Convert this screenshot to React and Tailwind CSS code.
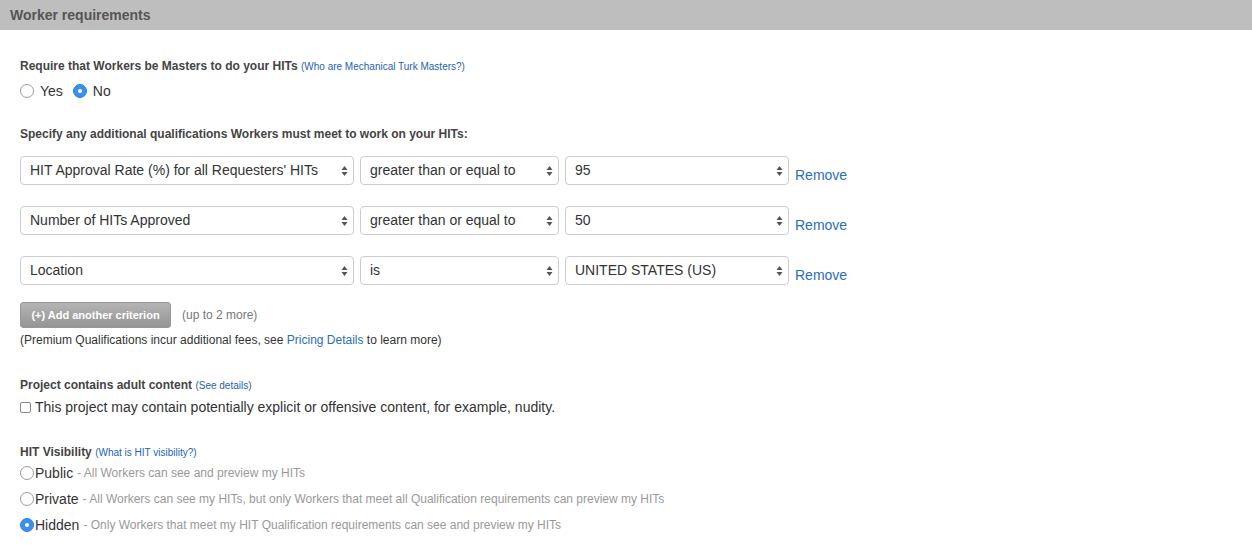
import { useState } from "react";

const font = { fontFamily: '"Liberation Sans", Arial, sans-serif' };

function Arrows() {
  return (
    <svg width="7" height="12" viewBox="0 0 7 12" className="shrink-0">
      <path d="M3.5 1 L6.5 5 L0.5 5 Z" fill="#555" />
      <path d="M3.5 11 L6.5 7 L0.5 7 Z" fill="#555" />
    </svg>
  );
}

function FakeSelect({ value, width }) {
  return (
    <div
      className={`flex items-center justify-between h-[29px] border border-[#ccc] rounded-[4px] bg-white pl-[9px] pr-[5px] text-[14px] text-[#333] ${width}`}
    >
      <span className="truncate">{value}</span>
      <Arrows />
    </div>
  );
}

function Radio({ checked }) {
  return checked ? (
    <span className="inline-flex items-center justify-center w-[14px] h-[14px] rounded-full bg-[#3b8fef] border border-[#2f7fe0] shrink-0">
      <span className="w-[4px] h-[4px] rounded-full bg-white" />
    </span>
  ) : (
    <span className="inline-block w-[14px] h-[14px] rounded-full border border-[#9a9a9a] bg-white shrink-0" />
  );
}

export default function App() {
  const [masters, setMasters] = useState("no");
  const [visibility, setVisibility] = useState("hidden");

  const criteria = [
    { q: "HIT Approval Rate (%) for all Requesters' HITs", op: "greater than or equal to", v: "95" },
    { q: "Number of HITs Approved", op: "greater than or equal to", v: "50" },
    { q: "Location", op: "is", v: "UNITED STATES (US)" },
  ];

  const visOptions = [
    { key: "public", label: "Public", desc: "All Workers can see and preview my HITs" },
    { key: "private", label: "Private", desc: "All Workers can see my HITs, but only Workers that meet all Qualification requirements can preview my HITs" },
    { key: "hidden", label: "Hidden", desc: "Only Workers that meet my HIT Qualification requirements can see and preview my HITs" },
  ];

  return (
    <div className="w-[1252px] h-[560px] bg-white overflow-hidden text-[#333]" style={font}>
      {/* Header */}
      <div className="h-[30px] bg-[#bebebe] flex items-center px-[10px]">
        <h2 className="text-[14px] font-bold text-[#555]">Worker requirements</h2>
      </div>

      <div className="px-[20px]">
        {/* Masters */}
        <div className="mt-[28px] text-[12px] font-bold text-[#444] leading-[16px]">
          Require that Workers be Masters to do your HITs{" "}
          <a className="text-[10px] font-normal text-[#1e5fb3]">(Who are Mechanical Turk Masters?)</a>
        </div>
        <div className="mt-[7px] flex items-center text-[14px] leading-[18px]">
          <span className="flex items-center cursor-pointer" onClick={() => setMasters("yes")}>
            <Radio checked={masters === "yes"} />
            <span className="ml-[6px]">Yes</span>
          </span>
          <span className="flex items-center ml-[10px] cursor-pointer" onClick={() => setMasters("no")}>
            <Radio checked={masters === "no"} />
            <span className="ml-[6px]">No</span>
          </span>
        </div>

        {/* Qualifications */}
        <div className="mt-[26px] text-[12px] font-bold text-[#444] leading-[16px]">
          Specify any additional qualifications Workers must meet to work on your HITs:
        </div>
        <div className="mt-[14px] flex flex-col gap-[21px]">
          {criteria.map((c, i) => (
            <div key={i} className="flex items-start h-[29px] gap-[6px]">
              <FakeSelect value={c.q} width="w-[334px]" />
              <FakeSelect value={c.op} width="w-[199px]" />
              <FakeSelect value={c.v} width="w-[224px]" />
              <a className="text-[14px] leading-[16px] pt-[11px] text-[#2a6ebb]">Remove</a>
            </div>
          ))}
        </div>

        <div className="mt-[17px] flex items-center">
          <button className="h-[26px] w-[151px] rounded-[3px] border border-[#999] bg-gradient-to-b from-[#b4b4b4] to-[#959595] text-white text-[11px] font-bold">
            (+) Add another criterion
          </button>
          <span className="ml-[11px] text-[12px] text-[#777]">(up to 2 more)</span>
        </div>
        <div className="mt-[4px] text-[12px] text-[#333] leading-[16px]">
          (Premium Qualifications incur additional fees, see{" "}
          <a className="text-[#2a6ebb]">Pricing Details</a> to learn more)
        </div>

        {/* Adult content */}
        <div className="mt-[29px] text-[12px] font-bold text-[#444] leading-[16px]">
          Project contains adult content{" "}
          <a className="text-[10px] font-normal text-[#1e5fb3]">(See details)</a>
        </div>
        <label className="mt-[4px] flex items-center text-[14px] leading-[18px]">
          <span className="inline-block w-[11px] h-[11px] border border-[#888] rounded-[2px] bg-white" />
          <span className="ml-[4px]">This project may contain potentially explicit or offensive content, for example, nudity.</span>
        </label>

        {/* Visibility */}
        <div className="mt-[28px] text-[12px] font-bold text-[#444] leading-[16px]">
          HIT Visibility{" "}
          <a className="text-[10px] font-normal text-[#1e5fb3]">(What is HIT visibility?)</a>
        </div>
        <div className="mt-[3px] flex flex-col gap-[8px]">
          {visOptions.map((o) => (
            <div
              key={o.key}
              className="flex items-center h-[18px] cursor-pointer"
              onClick={() => setVisibility(o.key)}
            >
              <Radio checked={visibility === o.key} />
              <span className="ml-[1px] text-[14px] text-[#333]">{o.label}</span>
              <span className="ml-[4px] text-[12px] text-[#999]">- {o.desc}</span>
            </div>
          ))}
        </div>
      </div>
    </div>
  );
}
